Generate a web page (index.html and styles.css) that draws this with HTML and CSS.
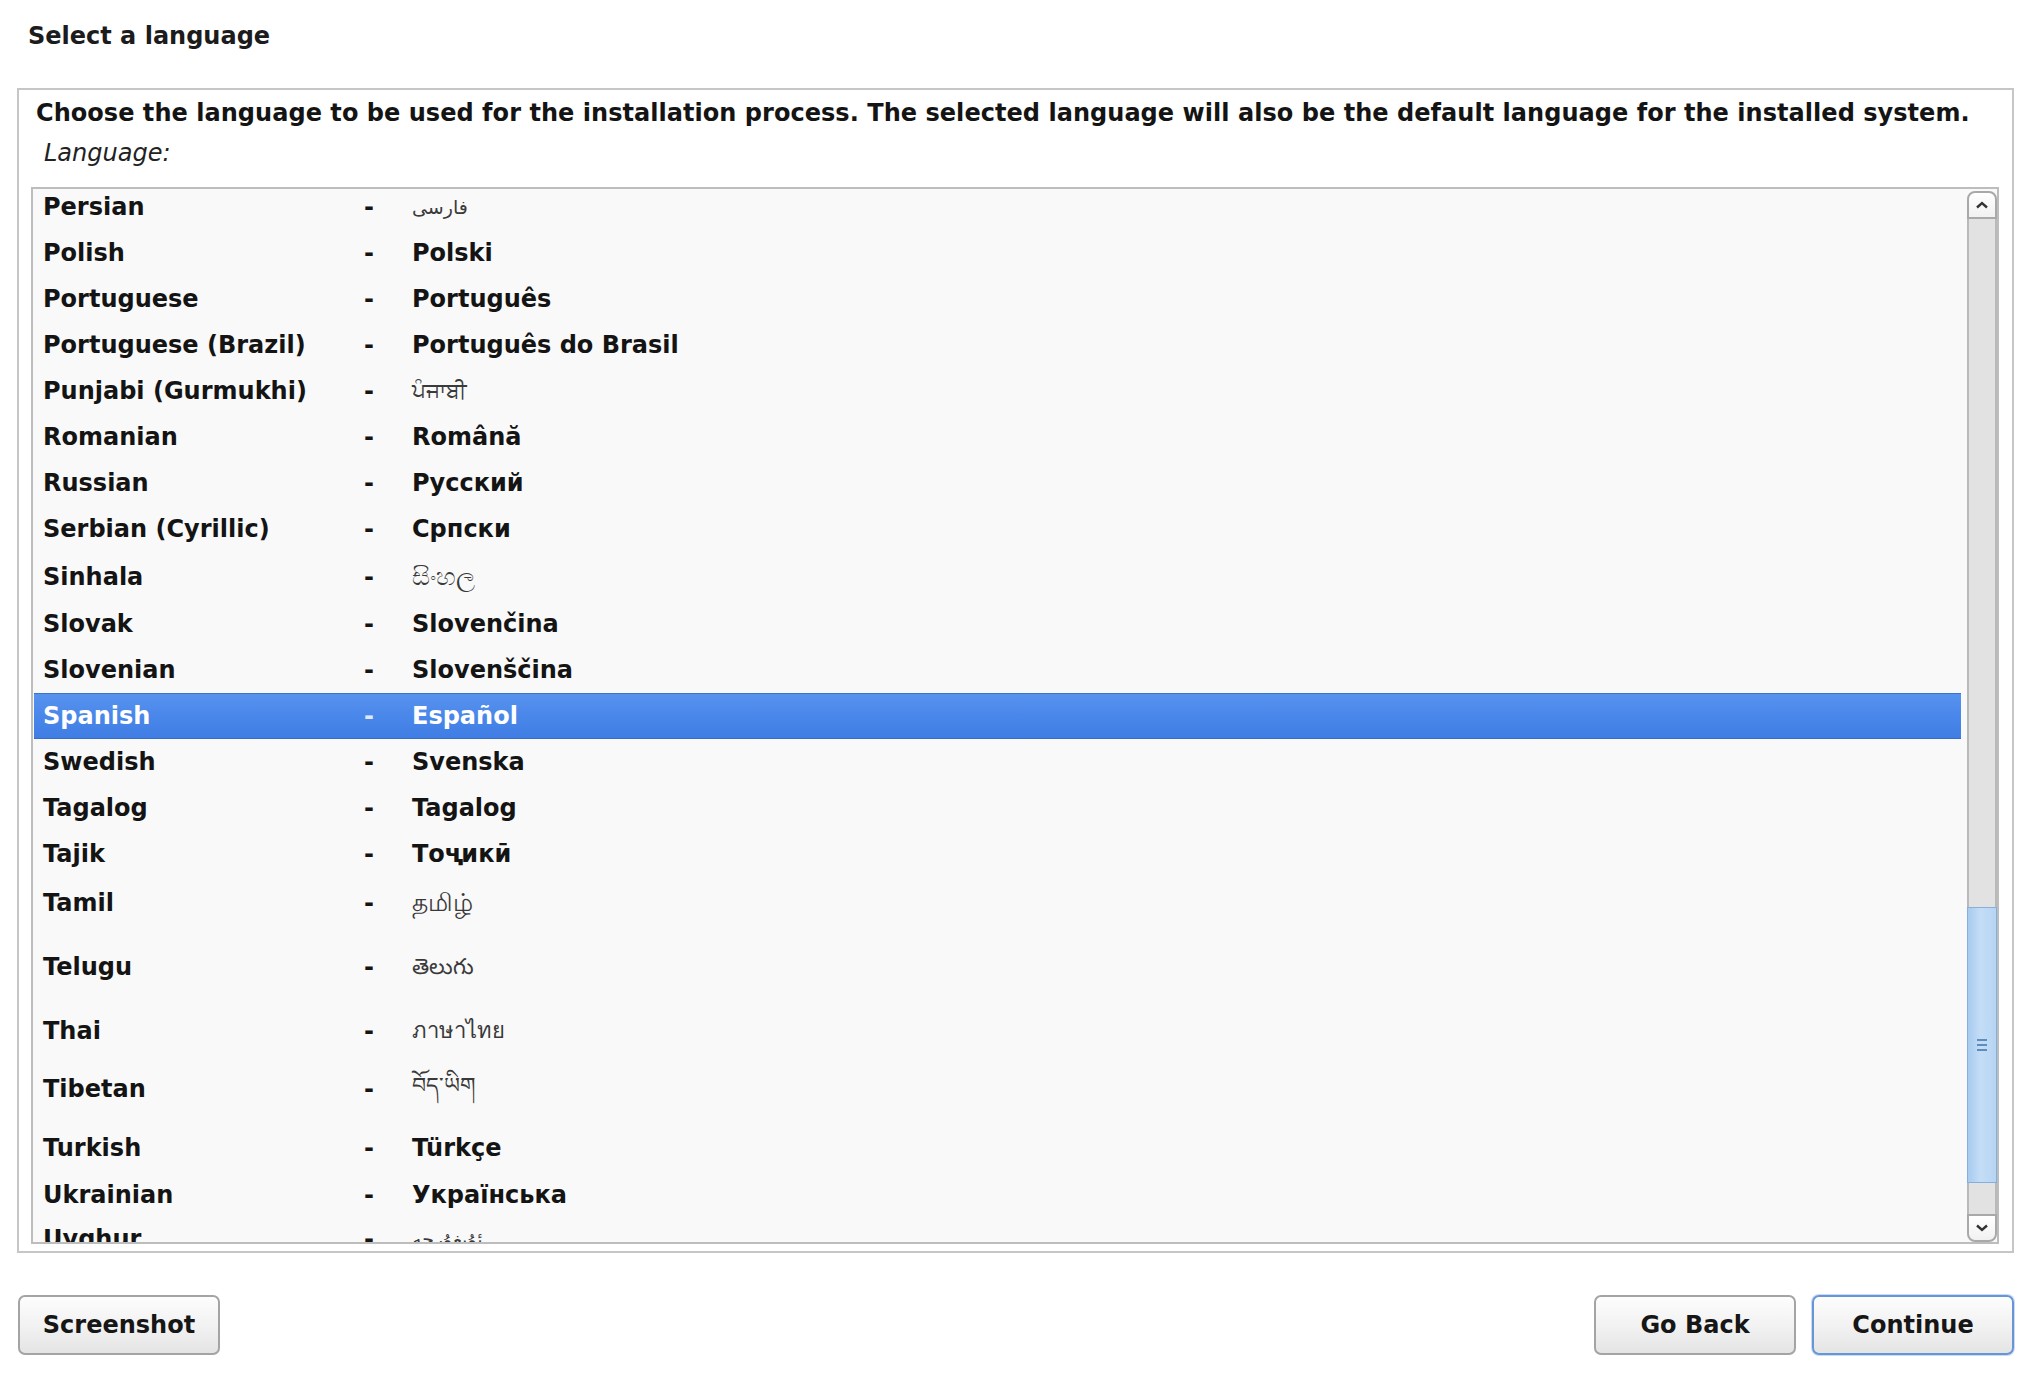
FILE: index.html
```html
<!DOCTYPE html>
<html lang="en">
<head>
<meta charset="utf-8">
<title>Select a language</title>
<link rel="stylesheet" href="styles.css">
</head>
<body>
<div class="page">
  <h1 class="title">Select a language</h1>
  <div class="frame">
    <p class="desc">Choose the language to be used for the installation process. The selected language will also be the default language for the installed system.</p>
    <p class="label">Language:</p>
    <div class="listbox">
      <div class="viewport">
        <div class="rows">
          <div class="row"><span class="name">Persian</span><span class="dash">-</span><span class="native alt small" dir="rtl">فارسی</span></div>
          <div class="row"><span class="name">Polish</span><span class="dash">-</span><span class="native">Polski</span></div>
          <div class="row"><span class="name">Portuguese</span><span class="dash">-</span><span class="native">Português</span></div>
          <div class="row"><span class="name">Portuguese (Brazil)</span><span class="dash">-</span><span class="native">Português do Brasil</span></div>
          <div class="row"><span class="name">Punjabi (Gurmukhi)</span><span class="dash">-</span><span class="native alt">ਪੰਜਾਬੀ</span></div>
          <div class="row"><span class="name">Romanian</span><span class="dash">-</span><span class="native">Română</span></div>
          <div class="row"><span class="name">Russian</span><span class="dash">-</span><span class="native">Русский</span></div>
          <div class="row"><span class="name">Serbian (Cyrillic)</span><span class="dash">-</span><span class="native">Српски</span></div>
          <div class="row row-sinhala"><span class="name">Sinhala</span><span class="dash">-</span><span class="native alt big">සිංහල</span></div>
          <div class="row"><span class="name">Slovak</span><span class="dash">-</span><span class="native">Slovenčina</span></div>
          <div class="row"><span class="name">Slovenian</span><span class="dash">-</span><span class="native">Slovenščina</span></div>
          <div class="row selected"><span class="name">Spanish</span><span class="dash">-</span><span class="native">Español</span></div>
          <div class="row"><span class="name">Swedish</span><span class="dash">-</span><span class="native">Svenska</span></div>
          <div class="row"><span class="name">Tagalog</span><span class="dash">-</span><span class="native">Tagalog</span></div>
          <div class="row"><span class="name">Tajik</span><span class="dash">-</span><span class="native">Тоҷикӣ</span></div>
          <div class="row row-tamil"><span class="name">Tamil</span><span class="dash">-</span><span class="native alt big">தமிழ்</span></div>
          <div class="row row-telugu"><span class="name">Telugu</span><span class="dash">-</span><span class="native alt">తెలుగు</span></div>
          <div class="row row-thai"><span class="name">Thai</span><span class="dash">-</span><span class="native alt">ภาษาไทย</span></div>
          <div class="row row-tibetan"><span class="name">Tibetan</span><span class="dash">-</span><span class="native alt raised">བོད་ཡིག</span></div>
          <div class="row row-turkish"><span class="name">Turkish</span><span class="dash">-</span><span class="native">Türkçe</span></div>
          <div class="row row-ukrainian"><span class="name">Ukrainian</span><span class="dash">-</span><span class="native">Українська</span></div>
          <div class="row"><span class="name">Uyghur</span><span class="dash">-</span><span class="native alt small" dir="rtl">ئۇيغۇرچە</span></div>
        </div>
      </div>
      <div class="scrollbar">
        <div class="sb-btn sb-up">
          <svg width="14" height="10" viewBox="0 0 14 10"><path d="M2 7.5 L7 3 L12 7.5" fill="none" stroke="#333" stroke-width="2.4"/></svg>
        </div>
        <div class="sb-track">
          <div class="sb-thumb">
            <span class="grip"></span><span class="grip"></span><span class="grip"></span>
          </div>
        </div>
        <div class="sb-btn sb-down">
          <svg width="14" height="10" viewBox="0 0 14 10"><path d="M2 2.5 L7 7 L12 2.5" fill="none" stroke="#333" stroke-width="2.4"/></svg>
        </div>
      </div>
    </div>
  </div>
  <div class="buttons">
    <button class="btn">Screenshot</button>
    <div class="spacer"></div>
    <button class="btn">Go Back</button>
    <button class="btn primary">Continue</button>
  </div>
</div>
</body>
</html>
```

FILE: styles.css
```css
* { box-sizing: border-box; }
html, body {
  margin: 0;
  padding: 0;
  background: #ffffff;
}
body {
  font-family: "DejaVu Sans", "Noto Sans", sans-serif;
  font-size: 24px;
  color: #161616;
}
.page {
  width: 2026px;
  height: 1376px;
  padding: 0 12px 0 17px;
  display: flex;
  flex-direction: column;
}
.title {
  margin: 0;
  padding: 22px 0 38px 11px;
  font-size: 24px;
  line-height: 28px;
  font-weight: bold;
  color: #1c1c1c;
}
.frame {
  border: 2px solid #c6c6c6;
  padding: 9px 13px 7px 12px;
  display: flex;
  flex-direction: column;
}
.desc {
  margin: 0 0 0 5px;
  font-weight: bold;
  line-height: 28px;
  white-space: nowrap;
  letter-spacing: 0.04px;
  color: #141414;
}
.label {
  margin: 12px 0 0 13px;
  font-style: italic;
  line-height: 28px;
  color: #222;
}
.listbox {
  margin-top: 20px;
  height: 1057px;
  border: 2px solid #bdbdbd;
  background: #f9f9f9;
  display: flex;
}
.viewport {
  flex: 1;
  overflow: hidden;
  padding-left: 1px;
}
.rows {
  margin-top: -5px;
}
.row {
  height: 46px;
  display: grid;
  grid-template-columns: 321px 48px 1fr;
  align-items: center;
  padding-left: 9px;
  font-weight: bold;
  line-height: 28px;
  color: #141414;
}
.row .native.alt {
  font-weight: normal;
  color: #3a3a3a;
  font-size: 22px;
}
.row .native.alt.small {
  font-size: 19px;
}
.row .native.alt.big {
  font-size: 25px;
}
.row .native[dir="rtl"] {
  text-align: left;
  direction: rtl;
  justify-self: start;
}
.row .native.raised {
  position: relative;
  top: -3px;
}
.row-sinhala { height: 49px; }
.row-tamil { height: 52px; }
.row-telugu { height: 76px; }
.row-thai { height: 51px; }
.row-tibetan { height: 65px; }
.row-turkish { height: 53px; }
.row-ukrainian { height: 42px; }
.row.selected {
  background: linear-gradient(to bottom, #5793ee 0%, #4a87ea 50%, #3f7de4 100%);
  box-shadow: inset 0 1px 0 #3a72d2, inset 0 -1px 0 #376cc8;
  color: #ffffff;
}
.row.selected .dash { color: #dfe9fb; }

.scrollbar {
  width: 30px;
  display: flex;
  flex-direction: column;
  padding: 2px 0 0;
  margin-left: 6px;
}
.sb-btn {
  height: 28px;
  background: linear-gradient(to bottom, #ffffff, #f1f1f1);
  border: 2px solid #a9a9a9;
  display: flex;
  align-items: center;
  justify-content: center;
}
.sb-up {
  border-radius: 8px 8px 0 0;
}
.sb-down {
  border-radius: 0 0 8px 8px;
}
.sb-track {
  flex: 1;
  background: #e2e2e2;
  border-left: 2px solid #b9b9b9;
  border-right: 2px solid #b9b9b9;
  display: flex;
  flex-direction: column;
}
.sb-thumb {
  margin-top: 688px;
  height: 276px;
  background: linear-gradient(to right, #a7cbef 0%, #c4ddf6 45%, #b6d5f3 100%);
  border: 1px solid #86afdb;
  margin-left: -2px;
  margin-right: -2px;
  display: flex;
  flex-direction: column;
  align-items: center;
  justify-content: center;
  gap: 3px;
}
.grip {
  display: block;
  width: 10px;
  height: 2px;
  background: #5e8cbd;
}
.buttons {
  margin-top: 42px;
  display: flex;
  gap: 16px;
  padding-left: 1px;
}
.spacer { flex: 1; }
.btn {
  width: 202px;
  height: 60px;
  font-family: "DejaVu Sans", "Noto Sans", sans-serif;
  font-size: 24px;
  font-weight: bold;
  color: #161616;
  background: linear-gradient(to bottom, #fdfdfd 0%, #f2f2f2 50%, #e4e4e4 100%);
  border: 2px solid #a4a4a4;
  border-radius: 7px;
  padding: 0;
}
.btn.primary {
  border-color: #6796d6;
  box-shadow: 0 0 0 1px #c8dbf3;
}
```
